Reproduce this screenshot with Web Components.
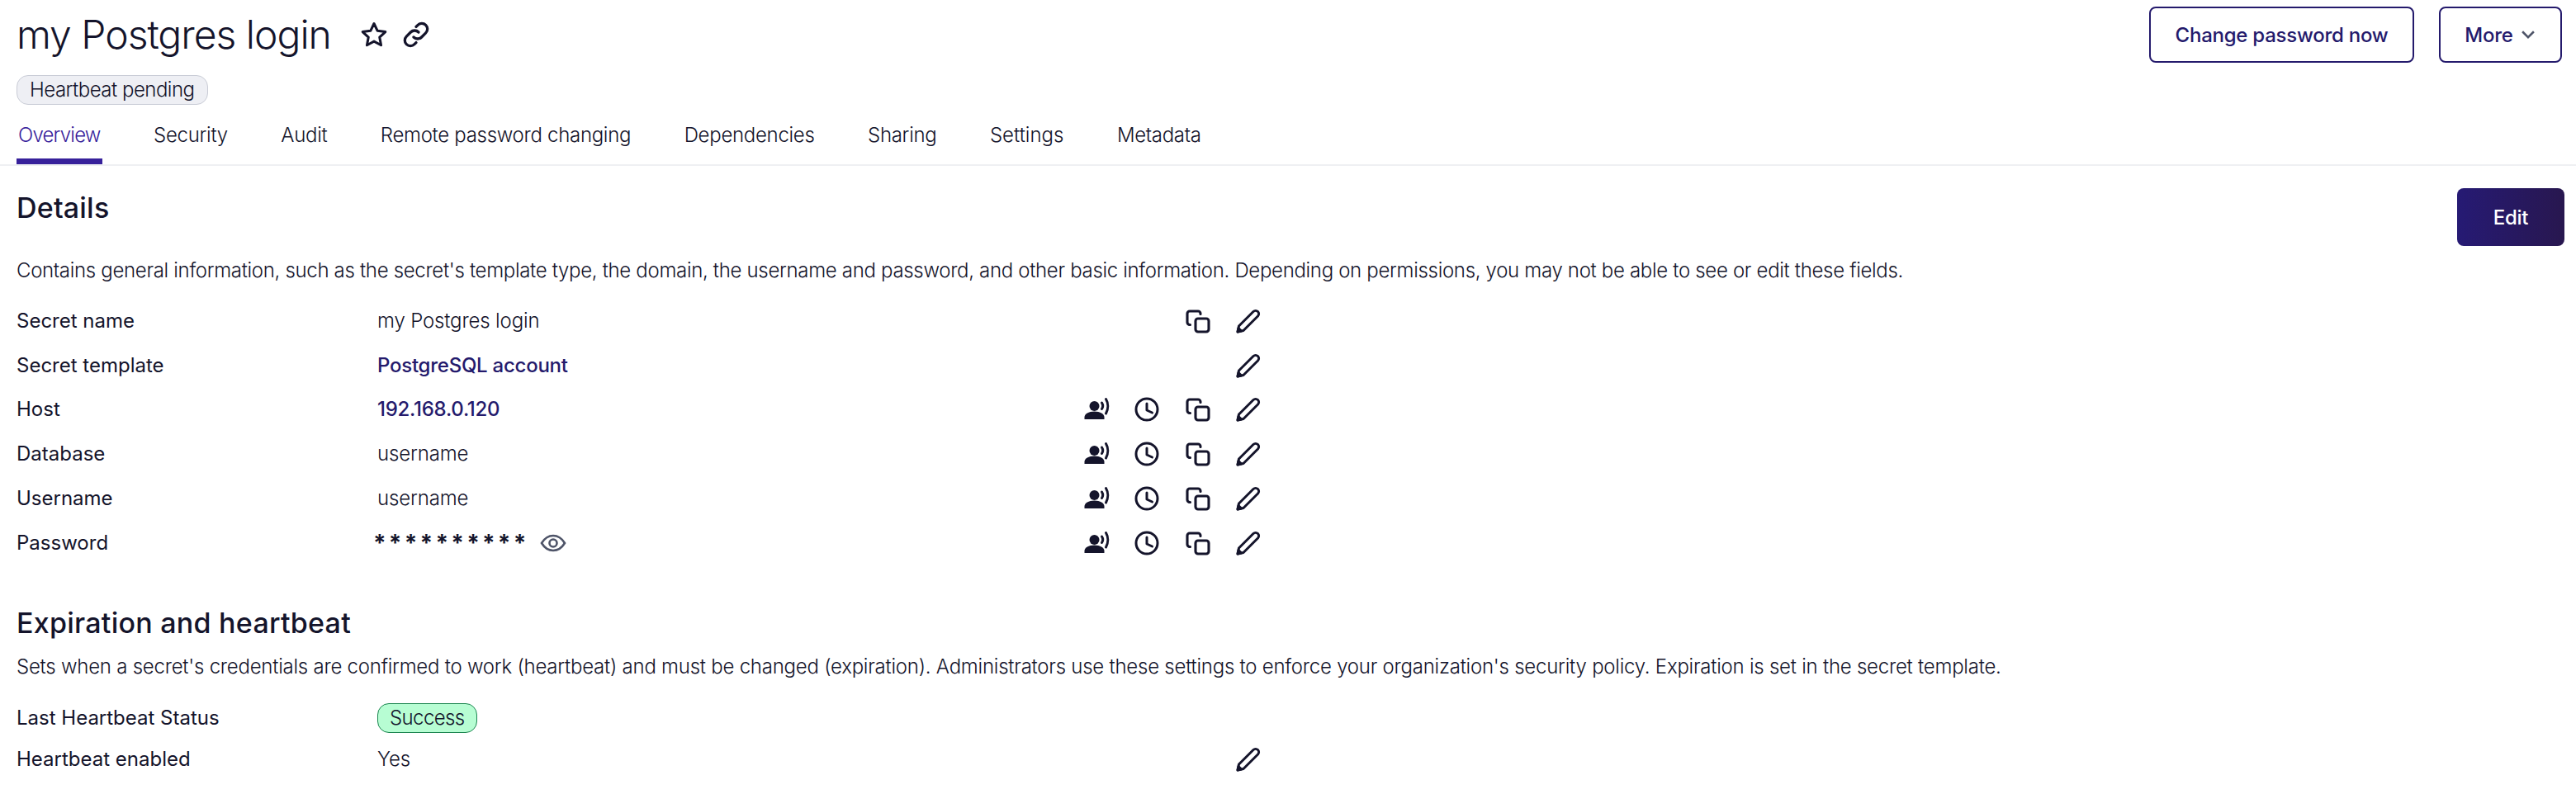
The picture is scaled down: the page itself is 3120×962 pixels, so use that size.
<!DOCTYPE html>
<html><head><meta charset="utf-8"><title>my Postgres login</title>
<style>
html,body{margin:0;padding:0;background:#fff;height:962px;overflow:hidden}
body{font-family:Inter,"Liberation Sans",sans-serif;color:#14142b;font-size:24px}
</style></head><body>
<secret-page></secret-page>
<script>
const ICONS={
 star:'<svg viewBox="0 0 24 24" fill="none" stroke="currentColor" stroke-width="2" stroke-linejoin="round"><path d="M12 3l2.8 5.9 6.4.8-4.7 4.4 1.200 6.400-5.700-3.100-5.700 3.100 1.200-6.400-4.700-4.400 6.400-.8z"/></svg>',
 link:'<svg viewBox="0 0 24 24" fill="none" stroke="currentColor" stroke-width="2.200" stroke-linecap="round"><path d="M10 14a4.500 4.500 0 0 0 6.400 0l3.400-3.400a4.500 4.500 0 0 0-6.400-6.400L12 5.600"/><path d="M14 10a4.500 4.500 0 0 0-6.400 0l-3.400 3.400a4.500 4.500 0 0 0 6.400 6.400L12 18.400"/></svg>',
 copy:'<svg viewBox="0 0 32 32" fill="none" stroke="currentColor" stroke-width="3.100" stroke-linecap="round" stroke-linejoin="round"><rect x="13" y="13" width="16" height="16" rx="3"/><path d="M6.500 20.500H6a3 3 0 0 1-3-3V7a3 3 0 0 1 3-3h10a3 3 0 0 1 3 3v.5"/></svg>',
 pen:'<svg viewBox="0 0 32 32" fill="none" stroke="currentColor" stroke-width="3" stroke-linejoin="round"><path d="M3 29l1.500-7L22 4.500a4 4 0 0 1 5.500 0 4 4 0 0 1 0 5.500L10 27.500z"/><path d="M3 29l1-4.500 3.500 3.500z" fill="currentColor"/></svg>',
 clock:'<svg viewBox="0 0 32 32" fill="none" stroke="currentColor" stroke-width="3" stroke-linecap="round" stroke-linejoin="round"><circle cx="16" cy="16" r="13"/><path d="M16 9v8l6.500 3"/></svg>',
 voice:'<svg viewBox="0 0 32 32" fill="currentColor"><circle cx="13.500" cy="12" r="6"/><path d="M1.500 28v-2.500c0-4 5-7 12-7s12 3 12 7V28z"/><path d="M22.500 8c1.600 2.500 1.600 5 0 7.500" fill="none" stroke="currentColor" stroke-width="3" stroke-linecap="round"/><path d="M27.500 3.500c3 5 3 12 0 17.500" fill="none" stroke="currentColor" stroke-width="3" stroke-linecap="round"/></svg>',
 eye:'<svg viewBox="0 0 32 24" fill="none" stroke="currentColor" stroke-width="2.600"><path d="M2 12C6 5.500 10.500 3 16 3s10 2.500 14 9c-4 6.500-8.500 9-14 9S6 18.500 2 12z"/><circle cx="16" cy="12" r="4.500"/></svg>',
 chev:'<svg viewBox="0 0 16 16" fill="none" stroke="currentColor" stroke-width="2"><path d="M2.500 5L8 10.500 13.500 5"/></svg>'
};
const def=(n,css,html)=>{
 customElements.define(n,class extends HTMLElement{
  connectedCallback(){ if(this.shadowRoot)return;
   const r=this.attachShadow({mode:'open'});
   const h=typeof html==='function'?html(this):html;
   r.innerHTML='<style>'+css+'</style>'+h; }
 });
};
def('ui-icon',`:host{display:inline-flex;width:var(--s,32px);height:var(--s,32px);color:inherit}svg{width:100%;height:100%;display:block}`,el=>ICONS[el.getAttribute('name')]);
def('ui-btn',`:host{display:inline-flex;align-items:center;justify-content:center;box-sizing:border-box;height:68px;border:2px solid #241a6c;border-radius:8px;color:#241a6c;background:#fff;font-weight:500;font-size:24px;letter-spacing:-.25px;gap:8px}
 :host([primary]){background:linear-gradient(90deg,#261a74,#28174f);color:#fff;border:0;height:70px;width:130px}
 ui-icon{--s:20px;color:#4e5468}`,el=>'<slot></slot>'+(el.hasAttribute('chev')?'<ui-icon name="chev"></ui-icon>':''));
def('ui-badge',`:host{display:inline-flex;align-items:center;box-sizing:border-box;height:36px;padding:0 15px;border-radius:14px;border:1.500px solid #c9ccd6;background:#eeeff4;font-size:24px;font-weight:300;letter-spacing:-.5px;line-height:1;white-space:nowrap}
 :host([ok]){background:#b7fdd3;border-color:#1c8650;padding:0 14px;letter-spacing:-.6px}`,'<slot></slot>');
def('ui-tab',`:host{display:block;padding:10px 2px 0;height:59px;box-sizing:border-box;font-weight:300;font-size:24px;letter-spacing:-.3px;line-height:28px;white-space:nowrap;border-bottom:7px solid transparent}
 :host([on]){color:#37219b;border-bottom-color:#37219b;letter-spacing:-.8px}`,'<slot></slot>');
def('ui-tabs',`:host{display:flex;gap:60.500px;border-bottom:2px solid #eff0f3;padding-left:20px;margin-top:13px}`,'<slot></slot>');
def('page-head',`:host{display:flex;justify-content:space-between;align-items:flex-start;padding:8px 17px 0 20px}
 .l{display:flex;flex-direction:column;align-items:flex-start;gap:15px}
 .t{display:flex;align-items:center;height:68px}
 h1{margin:0;font-size:48px;font-weight:300;line-height:68px;white-space:nowrap;letter-spacing:-1px}
 .i{display:flex;gap:15px;margin-left:34px;--s:36px}
 .r{display:flex;gap:30px}`,`<div class="l"><div class="t"><h1>my Postgres login</h1><div class="i"><ui-icon name="star"></ui-icon><ui-icon name="link"></ui-icon></div></div><ui-badge>Heartbeat pending</ui-badge></div><div class="r"><ui-btn style="width:321px">Change password now</ui-btn><ui-btn chev style="width:149px">More</ui-btn></div>`);
def('detail-row',`:host{display:grid;grid-template-columns:437px 1fr;align-items:center;height:53.800px;padding-left:20px;width:1508px;box-sizing:content-box;font-size:24px;font-weight:300;line-height:28px}
 .k{font-weight:400}
 .v{display:flex;align-items:center;justify-content:space-between}
 .val{display:flex;align-items:center;gap:13px;white-space:nowrap;letter-spacing:-.15px}
 :host([link]) .val{color:#241a6c;font-weight:500;letter-spacing:-.25px}
 .a{display:grid;grid-template-columns:repeat(4,32px);column-gap:29.500px;--s:32px;width:216.500px}
 .eye{--s:32px;color:#4e5468}
 :host([eye]) .val{letter-spacing:3.200px;font-weight:700;font-size:28px;margin-left:-5px}`,el=>{
  const a=(el.getAttribute('actions')||'').split(' ').filter(Boolean);
  const cols=['voice','clock','copy','pen'];
  const acts=cols.map(n=>a.includes(n)?`<ui-icon name="${n}"></ui-icon>`:'<span></span>').join('');
  const eye=el.hasAttribute('eye')?'<ui-icon class="eye" name="eye"></ui-icon>':'';
  return `<div class="k">${el.getAttribute('label')}</div><div class="v"><div class="val"><slot></slot>${eye}</div><div class="a">${acts}</div></div>`;
});
def('ui-section',`:host{display:block;padding:0 14px 0 20px}
 .h{display:flex;justify-content:space-between;align-items:flex-start}
 h2{margin:0;font-size:34px;font-weight:500;line-height:44px;white-space:nowrap;letter-spacing:var(--hs,0)}
 :host([top]) h2{margin-top:2px}
 p{margin:16px 0 0;font-size:24px;font-weight:300;line-height:30px;white-space:nowrap;letter-spacing:var(--ds,-.3px)}
 :host([top]) p{margin-top:15px}`,
 el=>`<div class="h"><h2>${el.getAttribute('heading')}</h2><slot name="act"></slot></div><p>${el.getAttribute('desc')}</p>`);
def('secret-page',`:host{display:block}
 .sec1{display:block;margin-top:27px;--ds:-.32px;--hs:.2px}
 .sec2{display:block;margin-top:48px;--ds:-.24px;--hs:.25px}
 .rows1{margin-top:19px}
 .rows2{margin-top:22px}
 .rows2 detail-row{height:50px}`,`
 <page-head></page-head>
 <ui-tabs><ui-tab on>Overview</ui-tab><ui-tab>Security</ui-tab><ui-tab>Audit</ui-tab><ui-tab>Remote password changing</ui-tab><ui-tab>Dependencies</ui-tab><ui-tab>Sharing</ui-tab><ui-tab style="letter-spacing:0">Settings</ui-tab><ui-tab>Metadata</ui-tab></ui-tabs>
 <ui-section top class="sec1" heading="Details" desc="Contains general information, such as the secret's template type, the domain, the username and password, and other basic information. Depending on permissions, you may not be able to see or edit these fields."><ui-btn primary slot="act">Edit</ui-btn></ui-section>
 <div class="rows1">
 <detail-row label="Secret name" actions="copy pen">my Postgres login</detail-row>
 <detail-row label="Secret template" actions="pen" link>PostgreSQL account</detail-row>
 <detail-row label="Host" actions="voice clock copy pen" link>192.168.0.120</detail-row>
 <detail-row label="Database" actions="voice clock copy pen">username</detail-row>
 <detail-row label="Username" actions="voice clock copy pen">username</detail-row>
 <detail-row label="Password" actions="voice clock copy pen" eye>**********</detail-row>
 </div>
 <ui-section class="sec2" heading="Expiration and heartbeat" desc="Sets when a secret's credentials are confirmed to work (heartbeat) and must be changed (expiration). Administrators use these settings to enforce your organization's security policy. Expiration is set in the secret template."></ui-section>
 <div class="rows2">
 <detail-row label="Last Heartbeat Status"><ui-badge ok>Success</ui-badge></detail-row>
 <detail-row label="Heartbeat enabled" actions="pen">Yes</detail-row>
 </div>`);
</script>
</body></html>
